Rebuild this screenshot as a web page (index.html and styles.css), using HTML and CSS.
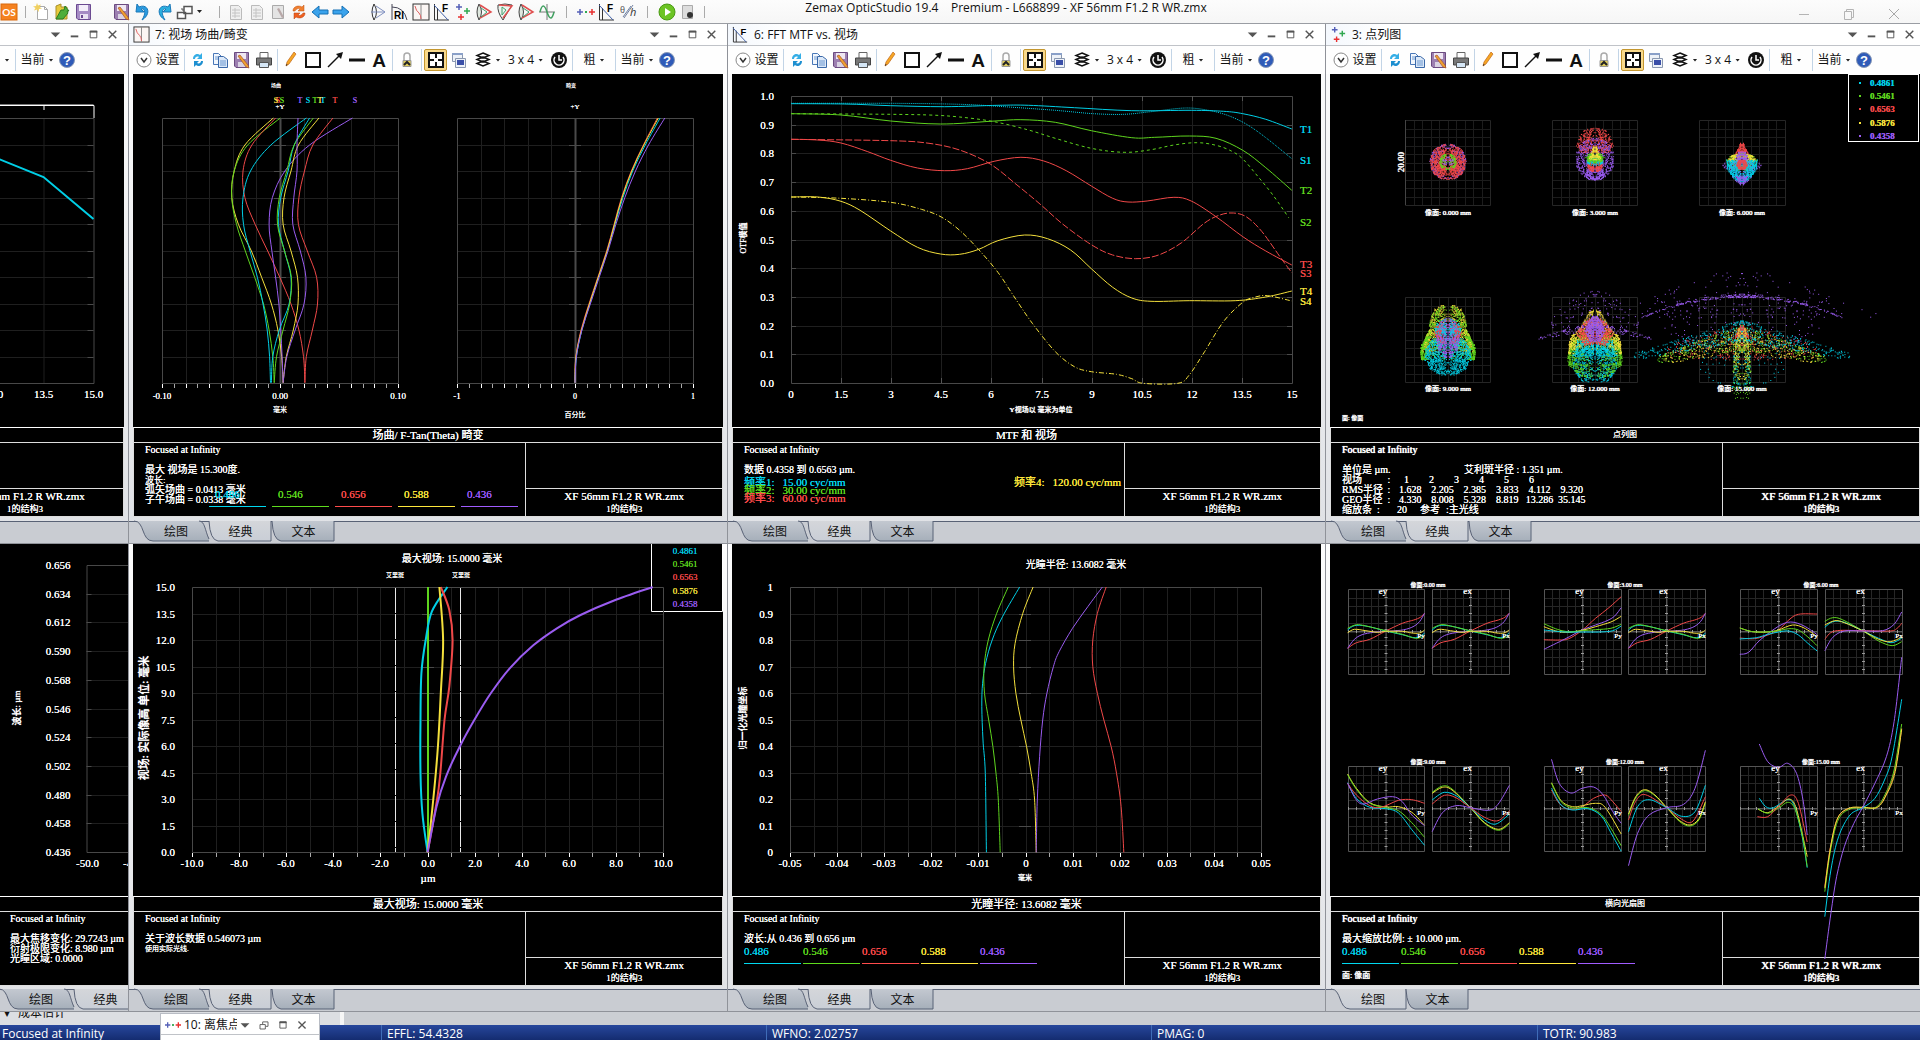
FILE: index.html
```html
<!DOCTYPE html>
<html lang="en">
<head>
<meta charset="utf-8">
<title>Zemax OpticStudio</title>
<link rel="stylesheet" href="styles.css">
</head>
<body>
<svg class="sprite" aria-hidden="true">
  <defs>
    <linearGradient id="gTab" x1="0" y1="0" x2="0" y2="1"><stop offset="0" stop-color="#c3c8d0"/><stop offset="1" stop-color="#a6afba"/></linearGradient>
    <linearGradient id="gTabOn" x1="0" y1="0" x2="0" y2="1"><stop offset="0" stop-color="#d4d6da"/><stop offset="1" stop-color="#c9ced6"/></linearGradient>
    <symbol id="i-os" viewBox="0 0 18 18"><rect x="1" y="1" width="16" height="16" fill="#f58220" stroke="#d9690c"/><text x="9" y="13" font-size="10" font-weight="700" text-anchor="middle" fill="#fff" font-family="Lato, sans-serif">OS</text></symbol>
    <symbol id="i-new" viewBox="0 0 18 18"><path d="M4.500 3.500h7l3 3v10h-10z" fill="#fff" stroke="#aaa"/><path d="M11.500 3.500v3h3" fill="none" stroke="#aaa"/><path d="M4 0l1 2.500L8 1.500 6.500 4 9 5.500 6 6l-.5 3L4 6.500 1 7.500 2.500 5 0 3.500 3 3z" fill="#f0d060"/></symbol>
    <symbol id="i-open" viewBox="0 0 18 18"><path d="M2 16V3l5-2v3h6v12z" fill="#e8c93c" stroke="#a88f2a"/><path d="M2 16l5-9h3l1-4 4 5h-2l1 2-5 6z" fill="#4fae3a" stroke="#2c7a22"/></symbol>
    <symbol id="i-save" viewBox="0 0 18 18"><path d="M1.500 1.500h14v15H3l-1.500-1.500z" fill="#a58bc4" stroke="#6b4a91"/><path d="M4 2h9v6H4z" fill="#f4effa"/><path d="M5 11h8v5H5z" fill="#e9e2f2"/><path d="M6 12h2v3H6z" fill="#6b4a91"/></symbol>
    <symbol id="i-edit" viewBox="0 0 18 18"><path d="M1.500 1.500h14v15H3l-1.500-1.500z" fill="#9c7fb0" stroke="#6b4a80"/><path d="M4 2h9v6H4z" fill="#eee6f2"/><path d="M5 11h8v5H5z" fill="#d9d2e2"/><path d="M5 5l2-1 8 10 1 3-3-1z" fill="#f0a030" stroke="#a0522d" stroke-width=".7"/></symbol>
    <symbol id="i-undo" viewBox="0 0 18 18"><path d="M3 1L2 9l8 0-3-3c3-1 6 3 1 11C18 11 14 0 5 4z" fill="#2b9be0" stroke="#1b78b8"/></symbol>
    <symbol id="i-redo" viewBox="0 0 18 18"><path d="M15 1l1 8-8 0 3-3c-3-1-6 3-1 11C0 11 4 0 13 4z" fill="#2bb0e0" stroke="#1b78b8"/></symbol>
    <symbol id="i-cascade" viewBox="0 0 18 18"><path d="M8 3.500h8v7H8zM1.500 9.500h8v6h-8z" fill="#fff" stroke="#555" stroke-width="1.500"/><path d="M5 6h2v2" fill="none" stroke="#555"/></symbol>
    <symbol id="i-greydoc" viewBox="0 0 18 18"><path d="M3.500 2.500h8l3 3v11h-11z" fill="#efefef" stroke="#bbb"/><path d="M5 7h8M5 10h8M5 13h8M8 5v10" stroke="#c4c4c4"/></symbol>
    <symbol id="i-greyedit" viewBox="0 0 18 18"><path d="M3.500 2.500h11v13h-11z" fill="#e4e4e4" stroke="#aaa"/><path d="M8 6l2-1 5 9-2 1z" fill="#b8a8a8"/></symbol>
    <symbol id="i-swap" viewBox="0 0 18 18"><path d="M3 8c0-5 6-6 9-4l2-2v6H8l2-2C8 5 6 6 5 8z" fill="#f08030" stroke="#c05010" stroke-width=".5"/><path d="M15 10c0 5-6 6-9 4l-2 2v-6h6l-2 2c2 1 4 0 5-2z" fill="#f06020" stroke="#b04010" stroke-width=".5"/></symbol>
    <symbol id="i-left" viewBox="0 0 18 18"><path d="M1 9l7-6v4h9v4H8v4z" fill="#3ba3ec" stroke="#1670b4"/></symbol>
    <symbol id="i-right" viewBox="0 0 18 18"><path d="M17 9l-7-6v4H1v4h9v4z" fill="#3ba3ec" stroke="#1670b4"/></symbol>
    <symbol id="i-lens" viewBox="0 0 18 18"><path d="M4 1q-4 8 0 16 5-8 0-16z" fill="#f4f8ff" stroke="#333"/><path d="M6 3l9 6-9 6M1 9h14" fill="none" stroke="#8090c0"/></symbol>
    <symbol id="i-ri" viewBox="0 0 18 18"><path d="M1 1v16M1 4q12 0 15 13" fill="none" stroke="#445"/><text x="3" y="16" font-size="10" font-weight="700" font-family="Liberation Sans, sans-serif">RI</text></symbol>
    <symbol id="i-field" viewBox="0 0 18 18"><rect x="1" y="1" width="16" height="16" fill="#fbf6f4" stroke="#333"/><path d="M9 1v16" stroke="#888"/><path d="M3 3q1 5 4 7 2 2 2 6" fill="none" stroke="#e06060"/></symbol>
    <symbol id="i-mtf" viewBox="0 0 18 18"><path d="M1.500 1v16H16M4.500 5v12" fill="none" stroke="#333"/><path d="M1 2l14 15" stroke="#4060a8"/><text x="9" y="9" font-size="10" font-weight="700" font-family="Liberation Sans, sans-serif">F</text></symbol>
    <symbol id="i-spot" viewBox="0 0 18 18"><path d="M5 1v6M2 4h6" stroke="#5560b8" stroke-width="1.500"/><path d="M13 5v6M10 8h6" stroke="#30a850" stroke-width="1.500"/><path d="M7 11v6M4 14h6" stroke="#e83030" stroke-width="1.500"/></symbol>
    <symbol id="i-lensr" viewBox="0 0 18 18"><path d="M4 1q-4 8 0 16 5-8 0-16z" fill="#dfe8df" stroke="#444"/><path d="M5 2l11 7-11 6" fill="none" stroke="#e05050" stroke-width="1.500"/><path d="M6 5l6 4-6 5" fill="none" stroke="#40a070"/></symbol>
    <symbol id="i-lensw" viewBox="0 0 18 18"><path d="M2 2q7-2 14 0L7 17q-6-8-5-15z" fill="#eef4ee" stroke="#444"/><path d="M3 2l13 1-9 12" fill="none" stroke="#e05050" stroke-width="1.500"/><path d="M6 4l4 3-4 5z" fill="none" stroke="#40a070"/></symbol>
    <symbol id="i-wave" viewBox="0 0 18 18"><path d="M1 9h16M9 1v16" stroke="#777"/><path d="M2 9q3-12 7 0t7 0" fill="none" stroke="#40a060" stroke-width="1.500"/></symbol>
    <symbol id="i-dots" viewBox="0 0 18 18"><path d="M3 6v6M0 9h6" stroke="#5560b8" stroke-width="1.500"/><path d="M8 9h2" stroke="#30a850" stroke-width="2"/><path d="M15 6v6M12 9h6" stroke="#e83030" stroke-width="1.500"/></symbol>
    <symbol id="i-theta" viewBox="0 0 18 18"><text x="1" y="10" font-size="9" font-family="Liberation Sans, sans-serif" fill="#555">θ</text><path d="M5 15l9-13M4 14l8-11" stroke="#7080a0"/><text x="11" y="13" font-size="11" font-style="italic" fill="#333">h</text></symbol>
    <symbol id="i-play" viewBox="0 0 18 18"><circle cx="9" cy="9" r="8" fill="#6cc424" stroke="#4a9a14"/><path d="M7 5l6 4-6 4z" fill="#fff"/></symbol>
    <symbol id="i-bug" viewBox="0 0 18 18"><path d="M3.500 2.500h10v13h-10z" fill="#ddd" stroke="#aaa"/><circle cx="11" cy="12" r="3" fill="#333"/></symbol>
    <symbol id="i-chev" viewBox="0 0 18 18"><circle cx="9" cy="9" r="7" fill="#fff" stroke="#888"/><path d="M6 7l3 4 3-4" fill="none" stroke="#333" stroke-width="1.500"/></symbol>
    <symbol id="i-sync" viewBox="0 0 18 18"><path d="M4 8c0-5 5-6 7-4l2-2v6H8l2-2C8 5 6 6 6 8z" fill="#35aee6"/><path d="M14 10c0 5-5 6-7 4l-2 2v-6h5l-2 2c2 1 4 0 4-2z" fill="#1d8fd0"/></symbol>
    <symbol id="i-copy" viewBox="0 0 18 18"><path d="M2.500 2.500h5l3 3v8h-8z" fill="#f2f7fd" stroke="#4a78b8"/><path d="M7.500 5.500h5l4 3v8h-9z" fill="#dbe8f8" stroke="#3a68a8"/><path d="M9 10h6M9 12h6M9 14h6M4 6h3M4 8h3" stroke="#6c98d0"/></symbol>
    <symbol id="i-print" viewBox="0 0 18 18"><path d="M5 1.500h8v6H5z" fill="#fff" stroke="#666"/><path d="M1.500 7h15v7h-15z" fill="#777" stroke="#444"/><path d="M4.500 11.500h9v5h-9z" fill="#d5e6f5" stroke="#555"/></symbol>
    <symbol id="i-pencil" viewBox="0 0 18 18"><path d="M4 15l1-4 7-10 2 2-7 10z" fill="#f6a623" stroke="#c0661a" stroke-width=".7"/><path d="M4 15l.5-2 1.200.8z" fill="#222"/></symbol>
    <symbol id="i-rect" viewBox="0 0 18 18"><rect x="2" y="2" width="14" height="14" fill="#fff" stroke="#111" stroke-width="2"/></symbol>
    <symbol id="i-arrow" viewBox="0 0 18 18"><path d="M2 16L14 4" stroke="#111" stroke-width="1.500"/><path d="M17 1l-2 7-5-5z" fill="#111"/></symbol>
    <symbol id="i-line" viewBox="0 0 18 18"><path d="M1 9h16" stroke="#111" stroke-width="3"/></symbol>
    <symbol id="i-text" viewBox="0 0 18 18"><text x="9" y="16" font-size="19" font-weight="700" text-anchor="middle" font-family="Liberation Sans, sans-serif" fill="#111">A</text></symbol>
    <symbol id="i-lock" viewBox="0 0 18 18"><path d="M6 10V5q0-3 3-3t3 3v5" fill="none" stroke="#aaa" stroke-width="1.500"/><path d="M5 9.500h8v6H5z" fill="#e2cf5a" stroke="#999"/><path d="M6 14l3-3 3 3" stroke="#222" fill="none" stroke-width="2"/></symbol>
    <symbol id="i-target" viewBox="0 0 18 18"><path d="M2 2h14v14H2z" fill="#fff" stroke="#111" stroke-width="2"/><path d="M9 2v5M9 11v5M2 9h5M11 9h5" fill="none" stroke="#111" stroke-width="2"/></symbol>
    <symbol id="i-wins" viewBox="0 0 18 18"><path d="M2.500 2.500h10v8h-10z" fill="#eef2f8" stroke="#8a98b0"/><path d="M2 2h11v2H2z" fill="#8aa0c8"/><path d="M5.500 7.500h10v9h-10z" fill="#eef2f8" stroke="#8a98b0"/><path d="M7 9h7v5H7z" fill="#3a4fa8"/></symbol>
    <symbol id="i-layers" viewBox="0 0 18 18"><path d="M9 2l6 2.500L9 7 3 4.500zM3 8.500L9 6l6 2.500L9 11zM3 12.500L9 10l6 2.500L9 15z" fill="#fff" stroke="#111" stroke-width="1.500"/></symbol>
    <symbol id="i-clock" viewBox="0 0 18 18"><circle cx="9" cy="9" r="8" fill="#111"/><path d="M5 6a5 5 0 1 0 8 0" fill="none" stroke="#fff" stroke-width="1.500"/><path d="M9 4v5h3" fill="none" stroke="#fff" stroke-width="1.500"/></symbol>
    <symbol id="i-help" viewBox="0 0 18 18"><circle cx="9" cy="9" r="7.500" fill="#2f5bb8" stroke="#8a9ab8"/><text x="9" y="13.500" font-size="13" font-weight="700" text-anchor="middle" fill="#fff" font-family="Liberation Sans, sans-serif">?</text></symbol>
    <symbol id="i-down" viewBox="0 0 18 18"><path d="M4 7h10l-5 5z" fill="#555"/></symbol>
    <symbol id="i-min" viewBox="0 0 18 18"><path d="M5 11h8" stroke="#555" stroke-width="2"/></symbol>
    <symbol id="i-max" viewBox="0 0 18 18"><path d="M5.500 5.500h7v7h-7z" fill="none" stroke="#555"/><path d="M5 6h8" stroke="#555" stroke-width="2"/></symbol>
    <symbol id="i-restore" viewBox="0 0 18 18"><path d="M4.500 8.500h6v5h-6zM7.500 8V5.500h6v5H11" fill="none" stroke="#555"/></symbol>
    <symbol id="i-x" viewBox="0 0 18 18"><path d="M5 5l8 8M13 5l-8 8" stroke="#555" stroke-width="1.500"/></symbol>
  </defs>
</svg>

<header class="appbar">
  <nav class="quick" id="quick" aria-label="Quick access"></nav>
  <h1 class="app-title">Zemax OpticStudio 19.4    Premium - L668899 - XF 56mm F1.2 R WR.zmx</h1>
  <div class="app-ctl">
    <button aria-label="Minimize"><svg viewBox="0 0 18 18"><path d="M4 9.500h10" stroke="#b4b4b4"/></svg></button>
    <button aria-label="Restore"><svg viewBox="0 0 18 18"><path d="M4.500 6.500h7v8h-7zM6.500 6V4.500h7v8H12" fill="none" stroke="#b4b4b4"/></svg></button>
    <button aria-label="Close"><svg viewBox="0 0 18 18"><path d="M4 4l10 10M14 4L4 14" stroke="#a8a8a8"/></svg></button>
  </div>
</header>

<main class="desk">
  <section class="cell cell-end">
    <article class="win">
      <div class="titlebar"><span class="win-title"></span></div>
      <div class="toolbar toolbar-end"></div>
      <svg class="chart" id="c1" viewBox="-466 74 590 353"></svg>
      <div class="foot"><h2 class="foot-title"></h2><div class="foot-left"></div><div class="foot-blank"></div><p class="foot-file">XF 56mm F1.2 R WR.zmx<br><small>1的结构3</small></p></div>
      <div class="tabs"></div>
    </article>
  </section>

  <section class="cell">
    <article class="win">
      <div class="titlebar"><svg class="ic"><use href="#i-field"/></svg><span class="win-title">7: 视场 场曲/畸变</span></div>
      <div class="toolbar"></div>
      <svg class="chart" id="c2" viewBox="133 74 590 353"></svg>
      <div class="foot">
        <h2 class="foot-title">场曲/ F-Tan(Theta) 畸变</h2>
        <div class="foot-left">
          <p>Focused at Infinity</p><p class="gap">最大 视场是 15.300度.</p><p><small>波长:</small></p><p>弧矢场曲 = 0.0413 毫米</p><p>子午场曲 = 0.0338 毫米</p>
          <ul class="waves waves-over"><li class="cy">0.486</li><li class="gr">0.546</li><li class="rd">0.656</li><li class="ye">0.588</li><li class="pu">0.436</li></ul>
        </div>
        <div class="foot-blank"></div><p class="foot-file">XF 56mm F1.2 R WR.zmx<br><small>1的结构3</small></p>
      </div>
      <div class="tabs" data-tabs="绘图,经典*,文本"></div>
    </article>
  </section>

  <section class="cell">
    <article class="win">
      <div class="titlebar"><svg class="ic"><use href="#i-mtf"/></svg><span class="win-title">6: FFT MTF vs. 视场</span></div>
      <div class="toolbar"></div>
      <svg class="chart" id="c3" viewBox="732 74 589 353"></svg>
      <div class="foot">
        <h2 class="foot-title">MTF 和 视场</h2>
        <div class="foot-left">
          <p>Focused at Infinity</p><p class="gap">数据 0.4358 到 0.6563 µm.</p>
          <div class="freqs"><p class="cy"><span>频率1:</span>15.00 cyc/mm</p><p class="ye"><span>频率4:</span>120.00 cyc/mm</p><p class="gr"><span>频率2:</span>30.00 cyc/mm</p><p></p><p class="rd"><span>频率3:</span>60.00 cyc/mm</p></div>
        </div>
        <div class="foot-blank"></div><p class="foot-file">XF 56mm F1.2 R WR.zmx<br><small>1的结构3</small></p>
      </div>
      <div class="tabs" data-tabs="绘图,经典*,文本"></div>
    </article>
  </section>

  <section class="cell cell-last">
    <article class="win">
      <div class="titlebar"><svg class="ic"><use href="#i-spot"/></svg><span class="win-title">3: 点列图</span></div>
      <div class="toolbar"></div>
      <svg class="chart" id="c4" viewBox="1330 74 590 353"></svg>
      <div class="foot">
        <h2 class="foot-title small">点列图</h2>
        <div class="foot-left">
          <p class="hv">Focused at Infinity</p>
          <p class="gap pair"><span>单位是 µm.</span><span>艾利斑半径 : 1.351 µm.</span></p>
          <table class="spots idx">
            <tr><th>视场</th><th>:</th><td>1</td><td>2</td><td>3</td><td>4</td><td>5</td><td>6</td></tr>
          </table>
          <table class="spots">
            <tr><th>RMS半径</th><th>:</th><td>1.628</td><td>2.205</td><td>2.385</td><td>3.833</td><td>4.112</td><td>9.320</td></tr>
            <tr><th>GEO半径</th><th>:</th><td>4.330</td><td>8.008</td><td>5.328</td><td>8.819</td><td>13.286</td><td>35.145</td></tr>
          </table>
          <p class="scale"><span>缩放条</span><span>:</span><span>20</span><span>参考</span><span>:主光线</span></p>
        </div>
        <div class="foot-blank"></div><p class="foot-file hv">XF 56mm F1.2 R WR.zmx<br><small>1的结构3</small></p>
      </div>
      <div class="tabs" data-tabs="绘图,经典*,文本"></div>
    </article>
  </section>

  <section class="cell cell-low cell-start">
    <article class="win">
      <svg class="chart" id="c5" viewBox="-1 544 590 352"></svg>
      <div class="foot">
        <h2 class="foot-title"></h2>
        <div class="foot-left"><p>Focused at Infinity</p><p class="gap">最大焦移变化: 29.7243 µm</p><p>衍射极限变化: 8.980 µm</p><p>光瞳区域: 0.0000</p></div>
        <div class="foot-blank"></div><p class="foot-file"></p>
      </div>
      <div class="tabs" data-tabs="绘图,经典*"></div>
    </article>
  </section>

  <section class="cell cell-low">
    <article class="win">
      <svg class="chart" id="c6" viewBox="133 544 590 352"></svg>
      <div class="foot">
        <h2 class="foot-title">最大视场: 15.0000 毫米</h2>
        <div class="foot-left"><p>Focused at Infinity</p><p class="gap">关于波长数据 0.546073 µm</p><p class="tiny">使用实际光线.</p></div>
        <div class="foot-blank"></div><p class="foot-file">XF 56mm F1.2 R WR.zmx<br><small>1的结构3</small></p>
      </div>
      <div class="tabs" data-tabs="绘图,经典*,文本"></div>
    </article>
  </section>

  <section class="cell cell-low">
    <article class="win">
      <svg class="chart" id="c7" viewBox="732 544 589 352"></svg>
      <div class="foot">
        <h2 class="foot-title">光瞳半径: 13.6082 毫米</h2>
        <div class="foot-left"><p>Focused at Infinity</p><p class="gap">波长:从 0.436 到 0.656 µm</p>
          <ul class="waves"><li class="cy">0.486</li><li class="gr">0.546</li><li class="rd">0.656</li><li class="ye">0.588</li><li class="pu">0.436</li></ul></div>
        <div class="foot-blank"></div><p class="foot-file">XF 56mm F1.2 R WR.zmx<br><small>1的结构3</small></p>
      </div>
      <div class="tabs" data-tabs="绘图,经典*,文本"></div>
    </article>
  </section>

  <section class="cell cell-low cell-last">
    <article class="win">
      <svg class="chart" id="c8" viewBox="1330 544 590 352"></svg>
      <div class="foot">
        <h2 class="foot-title small">横向光扇图</h2>
        <div class="foot-left"><p class="hv">Focused at Infinity</p><p class="gap">最大缩放比例: ± 10.000 µm.</p>
          <ul class="waves"><li class="cy">0.486</li><li class="gr">0.546</li><li class="rd">0.656</li><li class="ye">0.588</li><li class="pu">0.436</li></ul>
          <p class="surf hv">面: 像面</p></div>
        <div class="foot-blank"></div><p class="foot-file hv">XF 56mm F1.2 R WR.zmx<br><small>1的结构3</small></p>
      </div>
      <div class="tabs" data-tabs="绘图*,文本"></div>
    </article>
  </section>
</main>

<div class="understrip"><span>▾</span><span>成本估计</span></div>
<footer class="status"><span>Focused at Infinity</span><span>EFFL: 54.4328</span><span>WFNO: 2.02757</span><span>PMAG: 0</span><span>TOTR: 90.983</span></footer>
<aside class="floatwin">
  <svg class="ic"><use href="#i-dots"/></svg><span class="float-title">10: 离焦点</span>
  <button aria-label="Menu"><svg class="ic"><use href="#i-down"/></svg></button>
  <button aria-label="Restore"><svg class="ic"><use href="#i-restore"/></svg></button>
  <button aria-label="Maximize"><svg class="ic"><use href="#i-max"/></svg></button>
  <button aria-label="Close"><svg class="ic"><use href="#i-x"/></svg></button>
</aside>
<script src="charts.js"></script>
</body>
</html>
```
FILE: styles.css
```css
* { box-sizing: border-box; }
body {
  margin: 0; min-height: 100vh; display: flex; flex-direction: column;
  background: #cbced3; color: #111; overflow: hidden; position: relative;
  font: 12px/16px "Open Sans", "Noto Sans CJK SC", sans-serif;
}
h1, h2, p, ul { margin: 0; padding: 0; font-weight: 400; }
button { border: 0; background: none; padding: 0; margin: 0; font: inherit; color: inherit; }
.sprite { position: absolute; width: 0; height: 0; }
.ic { width: 18px; height: 18px; flex: none; display: block; }

.appbar { height: 24px; flex: none; display: grid; grid-template-columns: 1fr auto 1fr; background: linear-gradient(#fcfcfc, #f6f6f6); border-bottom: 1px solid #9a9da3; }
.quick { display: flex; align-items: center; gap: 3px; min-width: 0; }
.quick .sep { width: 1px; height: 12px; background: #aaa; margin: 0 4px; }
.quick .sep.wide { margin: 0 7px; }
.quick .skip { width: 14px; }
.quick .caret { margin-right: 10px; }
.app-title { font-size: 12px; line-height: 15px; white-space: pre; padding-left: 92px; }
.app-ctl { display: flex; justify-content: flex-end; align-items: center; gap: 27px; padding: 4px 17px 0 0; }
.app-ctl button, .app-ctl svg { width: 18px; height: 18px; display: block; }

.desk { flex: 1; display: grid; grid-template-columns: 128fr 599fr 598fr 595fr; grid-template-rows: 520fr 468fr; }
.cell { min-width: 0; overflow: hidden; display: flex; border-bottom: 1px solid #8f9299; background: linear-gradient(#fdfdfd, #dfe1e5); }
.cell + .cell { border-left: 1px solid #8f9299; }
.cell.cell-start { border-left: 0; }
.cell-end { justify-content: flex-end; }
.win { flex: 1; min-width: 0; display: flex; flex-direction: column; }
.cell-end .win, .cell-start .win { flex: none; width: 599px; }
.cell-start .win { margin-left: -6px; }
.titlebar { height: 22px; flex: none; display: flex; align-items: center; gap: 5px; padding: 0 6px 0 4px; background: linear-gradient(90deg, #f4f8fd, #fff 10%); border-bottom: 1px solid #c0c3c8; }
.win-title { flex: 1; white-space: nowrap; }
.win-ctl { display: flex; }
.win-ctl button { width: 19px; display: flex; justify-content: center; }
.titlebar .ic { width: 17px; height: 17px; }
.cell-last .titlebar { padding-right: 1px; }
.toolbar { height: 28px; flex: none; display: flex; align-items: center; padding-left: 4px; background: #fefefe; }
.toolbar-end { justify-content: flex-end; padding-right: 50px; }
.toolbar button { width: 22px; height: 24px; display: flex; align-items: center; justify-content: center; flex: none; white-space: nowrap; }
.toolbar .sep { width: 1px; height: 22px; background: #c2d4e6; margin: 0 2px; flex: none; }
.toolbar .set { width: 49px; gap: 2px; }
.toolbar .w12 { width: 12px; }
.toolbar .w24 { width: 24px; }
.toolbar .w32 { width: 32px; gap: 4px; }
.toolbar .w38 { width: 38px; gap: 4px; }
.toolbar .w45 { width: 45px; gap: 4px; }
.toolbar .on { width: 23px; height: 22px; background: #f8d98c; border: 1px solid #c4962e; border-radius: 2px; }
.caret { width: 5px; height: 3px; background: #222; clip-path: polygon(0 0, 100% 0, 50% 100%); flex: none; }

.chart { flex: 1 1 0; height: 0; min-height: 0; margin: 0 4px; background: #000; display: block; overflow: visible; position: relative; }
.chart, .foot { font-family: "Liberation Serif", "Noto Sans CJK SC", serif; color: #fff; text-shadow: 0 0 0 currentColor; }
.cell-last .chart, .cell-last .foot { margin-right: 0; }
#c8 { z-index: 1; }
.foot {
  flex: none; height: 90px; margin: 0 4px; background: #ddd; border: 1px solid #ddd; border-top-color: #fff; font-size: 10px; line-height: 10px;
  display: grid; grid-template-columns: 392fr 196fr; grid-template-rows: 14px 45px 27px; gap: 1px; white-space: nowrap;
}
.foot > * { background: #000; min-width: 0; }
.foot-title { grid-column: 1 / 3; font-size: 11px; line-height: 14px; text-align: center; }
.foot-title.small { font-size: 8px; }
.foot-left { grid-row: 2 / 4; padding: 2px 0 0 11px; position: relative; }
.gap { padding-top: 10px; }
.foot-file { font-size: 11px; line-height: 12px; text-align: center; padding-top: 1px; }
small { font-size: 9px; }
.tiny { font-size: 7px; }
.hv { text-shadow: 0 0 0 currentColor, 0 0 1px currentColor; }
.surf { font-size: 8px; padding-top: 7px; }
.waves { list-style: none; display: grid; grid-template-columns: repeat(5, 57px); gap: 2px; padding-top: 1px; font-size: 11px; line-height: 12px; }
.waves li { border-bottom: 1px solid; padding-bottom: 6px; }
.waves-over { position: absolute; left: 75px; top: 44px; gap: 6px; }
.waves-over li { padding: 0 0 6px 6px; }
.freqs { display: grid; grid-template-columns: 270px auto; justify-content: start; font-size: 11px; line-height: 8px; padding-top: 3px; }
.freqs span { display: inline-block; margin-right: 8px; }
.cy { color: #00d8f0; } .gr { color: #5fdc1e; } .rd { color: #ff4c4c; } .ye { color: #ffe83c; } .pu { color: #a05cff; }
.pair span:first-child { display: inline-block; width: 122px; }
.spots { border-spacing: 0; font-size: 10px; line-height: 10px; table-layout: fixed; width: 246px; }
.spots th, .spots td { padding: 0; font-weight: 400; text-align: center; }
.spots th:first-child { width: 42px; text-align: left; }
.spots th:nth-child(2) { width: 10px; }
.spots.idx { width: 202px; }
.scale span { display: inline-block; }
.scale span:first-child { width: 35px; } .scale span:nth-child(2) { width: 20px; } .scale span:nth-child(3) { width: 23px; } .scale span:nth-child(4) { width: 26px; }

.tabs { flex: none; height: 22px; margin-top: 4px; display: flex; background: #c9ccd2; border-top: 1px solid #596276; }
.cell-low .tabs { margin-top: 3px; }
.tab { position: relative; width: 63px; height: 20px; font-size: 12px; line-height: 18px; flex: none; }
.tab:first-child { width: 80px; padding-left: 14px; }
.tab svg { position: absolute; inset: -1px 0 0 0; width: 100%; height: 21px; overflow: visible; }
.tab span { position: relative; }

.understrip { height: 13px; flex: none; display: flex; gap: 8px; padding-left: 4px; overflow: hidden; line-height: 2px; font-size: 12px; background: linear-gradient(90deg, #dcdee2 0 340px, #f6f6f6 340px 344px, #cbced3 344px); }
.status { height: 15px; flex: none; display: grid; grid-template-columns: 381fr 385fr 385fr 386fr 383fr; background: linear-gradient(#27479c, #142c70); color: #fff; line-height: 17px; overflow: hidden; }
.status span { padding-left: 5px; white-space: nowrap; }
.status span:first-child { padding-left: 2px; }
.status span + span { border-left: 1px solid #3f6cb8; }
.floatwin { position: absolute; left: 160px; bottom: 0; width: 160px; height: 27px; background: #fff; border: 1px solid #b8bcc4; border-bottom: 0; display: flex; align-items: center; padding: 0 4px 5px; }
.floatwin::after { content: ""; position: absolute; left: 0; right: 0; bottom: 5px; height: 1px; background: #c0c3c8; }
.float-title { width: 56px; padding-left: 3px; overflow: hidden; white-space: nowrap; flex: none; }
.floatwin .ic { width: 16px; height: 18px; }
.floatwin button { width: 19px; flex: none; }
```
FILE: charts.js
```js
const CY = '#00cfe6', GR = '#5ed41e', RD = '#f04848', YE = '#f4e03c', PU = '#9a5cf0';
const COL = { c: CY, g: GR, r: RD, y: YE, p: PU };
const NS = 'http://www.w3.org/2000/svg';

function el(root, name, attrs, text) {
  const e = document.createElementNS(NS, name);
  for (const k in attrs) e.setAttribute(k, attrs[k]);
  if (text !== undefined) e.textContent = text;
  root.appendChild(e);
  return e;
}
const path = (r, d, stroke, w = 1, extra = {}) => el(r, 'path', { d, stroke, 'stroke-width': w, fill: 'none', ...extra });
const text = (r, x, y, s, size = 11, anchor = 'middle', fill = '#fff', extra = {}) =>
  el(r, 'text', { x, y: y + Math.round(size * 0.34), 'font-size': size, 'text-anchor': anchor, fill, style: `color:${fill}`, ...extra }, s);
const vtext = (r, x, y, s, size) =>
  el(r, 'text', { transform: `translate(${x + Math.round(size * 0.36)} ${y}) rotate(-90)`, 'font-size': size, 'text-anchor': 'middle', fill: '#fff', class: 'hv' }, s);

function grid(r, x0, y0, x1, y1, nx, ny, color = '#1f1f1f', frame = '#484848') {
  let d = '';
  for (let i = 1; i < nx; i++) d += `M${Math.round(x0 + (x1 - x0) * i / nx) + 0.5} ${y0}V${y1}`;
  for (let i = 1; i < ny; i++) d += `M${x0} ${Math.round(y0 + (y1 - y0) * i / ny) + 0.5}H${x1}`;
  path(r, d, color);
  if (frame) path(r, `M${x0 + .5} ${y0 + .5}H${x1 + .5}V${y1 + .5}H${x0 + .5}Z`, frame);
}
function ticks(r, x0, x1, y, n) {
  for (let i = 0; i <= n; i++) {
    const x = Math.round(x0 + (x1 - x0) * i / n) + 0.5;
    path(r, `M${x} ${y + 1}v4`, i % 2 ? '#aaa' : '#fff');
  }
}
function stubs(r, x, y0, y1, n, a, b) {
  for (let i = 1; i < n; i++) path(r, `M${x - a} ${Math.round(y0 + (y1 - y0) * i / n) + .5}H${x + b}`, '#4a4a4a');
}
/* map(px, py) turns digitised samples into chart coordinates */
const mapper = (ox, oy, sx) => (x, y) => [ox + x / sx, oy + y / 3];
function smooth(pts) {
  let d = `M${pts[0][0].toFixed(1)} ${pts[0][1].toFixed(1)}`;
  for (let i = 0; i < pts.length - 1; i++) {
    const p0 = pts[i - 1] || pts[i], p1 = pts[i], p2 = pts[i + 1], p3 = pts[i + 2] || p2;
    const c = [p1[0] + (p2[0] - p0[0]) / 6, p1[1] + (p2[1] - p0[1]) / 6, p2[0] - (p3[0] - p1[0]) / 6, p2[1] - (p3[1] - p1[1]) / 6, p2[0], p2[1]];
    d += 'C' + c.map(v => v.toFixed(1)).join(' ');
  }
  return d;
}
function curve(r, map, flat, color, w = 1, dash) {
  const n = flat.trim().split(/[\s,]+/).map(Number), pts = [];
  for (let i = 0; i < n.length; i += 2) pts.push(map(n[i], n[i + 1]));
  path(r, smooth(pts), color, w, dash ? { 'stroke-dasharray': dash } : {});
}
/* curve sampled on the ten horizontal grid lines */
const ROWS = [144, 225, 303, 383, 463, 543, 622, 702, 780, 860, 938];
const rowCurve = (r, map, xs, color) => curve(r, map, xs.map((x, i) => `${x},${ROWS[i]}`).join(' '), color);
const $ = id => document.getElementById(id);

/* upper left: partly visible chart */
{
  const r = $('c1');
  grid(r, -206, 118, 94, 383, 6, 10);
  path(r, 'M-206 105.500H94.500V118', '#fff');
  path(r, 'M-206 104.500H94', '#777');
  path(r, 'M44.500 105v5', '#fff');
  stubs(r, 94, 118, 383, 10, 6, 0);
  path(r, 'M-40 150L0 159.300L44 177L94 219', CY, 2);
  text(r, -6, 394, '12.0'); text(r, 44, 394, '13.5'); text(r, 94, 394, '15.0');
}
/* field curvature and distortion */
{
  const r = $('c2'), m = mapper(0, 70, 2.148);
  for (const [a, b, c] of [[162, 398, 280], [457, 693, 575]]) {
    grid(r, a, 118, b, 383, 10, 10);
    path(r, `M${c + .5} 118V383`, '#4a4a4a', 2);
    stubs(r, c, 118, 383, 10, 6, 6);
    ticks(r, a, b, 383, 20);
    text(r, c, 107, '+Y', 7);
  }
  const L = [
    ['y', 587, 526, 503, 498, 512, 540, 562, 583, 597, 605, 608],
    ['g', 602, 532, 503, 498, 508, 527, 547, 566, 578, 586, 589],
    ['r', 592, 541, 522, 526, 548, 575, 601, 625, 642, 652, 655],
    ['c', 658, 582, 538, 522, 523, 537, 553, 565, 574, 579, 581],
    ['p', 757, 665, 612, 585, 578, 584, 592, 599, 603, 606, 608],
    ['r', 715, 672, 654, 642, 641, 660, 680, 682, 671, 658, 655],
    ['c', 665, 632, 619, 603, 598, 611, 625, 621, 600, 586, 583],
    ['g', 673, 632, 616, 600, 596, 611, 626, 622, 608, 594, 589],
    ['y', 685, 641, 625, 610, 608, 625, 639, 640, 630, 615, 608],
    ['p', 640, 638, 638, 631, 629, 645, 657, 653, 634, 616, 608],
    ['r', 1412, 1382, 1356, 1335, 1319, 1303, 1284, 1265, 1248, 1237, 1235],
    ['c', 1418, 1386, 1359, 1338, 1321, 1305, 1286, 1267, 1250, 1238, 1235],
    ['y', 1414, 1383, 1357, 1336, 1320, 1304, 1285, 1266, 1249, 1237, 1235],
    ['p', 1428, 1393, 1365, 1342, 1323, 1306, 1287, 1268, 1250, 1238, 1235]
  ];
  for (const [k, ...xs] of L) rowCurve(r, m, xs, COL[k]);
  for (const [x, s, k] of [[278, 'S', 'r'], [276, 'S', 'y'], [282, 'S', 'g'], [300, 'T', 'p'], [308, 'S', 'c'], [315, 'T', 'g'], [323, 'T', 'c'], [320, 'T', 'y'], [335, 'T', 'r'], [355, 'S', 'p']])
    text(r, x, 100, s, 8, 'middle', COL[k]);
  text(r, 276, 85, '场曲', 5); text(r, 571, 85, '畸变', 5);
  text(r, 162, 396, '-0.10', 9); text(r, 280, 396, '0.00', 9); text(r, 398, 396, '0.10', 9);
  text(r, 457, 396, '-1', 9); text(r, 575, 396, '0', 8); text(r, 693, 396, '1', 8);
  text(r, 280, 410, '毫米', 7); text(r, 575, 415, '百分比', 7);
}
/* MTF against field */
{
  const r = $('c3'), m = mapper(730, 70, 2.613);
  grid(r, 791, 96, 1292, 383, 10, 10);
  stubs(r, 791, 96, 383, 10, 0, 5); stubs(r, 1292, 96, 383, 10, 5, 0);
  for (let i = 1; i < 10; i++) path(r, `M${Math.round(791 + 50.1 * i) + .5} 96v5M${Math.round(791 + 50.1 * i) + .5} 383v-5`, '#555');
  const C = [
    ['c', '160,101 300,102 420,107 560,110 700,106 780,106 900,113 1050,122 1205,121 1290,124 1340,131 1400,148 1468,177'],
    ['c', '160,100 420,100 600,103 700,109 850,121 950,131 1030,133 1100,125 1190,114 1250,121 1300,136 1350,163 1400,203 1468,266', '1 1'],
    ['g', '160,131 290,135 420,153 550,162 680,154 760,149 850,157 944,182 1050,203 1110,202 1200,198 1270,205 1340,241 1400,293 1468,361'],
    ['g', '160,131 420,133 520,135 600,141 690,155 780,180 850,205 944,235 1030,247 1100,239 1160,225 1220,218 1270,226 1310,243 1340,267 1380,320 1420,377 1460,443', '3 3'],
    ['r', '160,208 230,210 290,219 360,245 420,271 490,294 560,302 620,296 690,274 760,262 820,273 880,303 944,348 1000,385 1040,396 1090,393 1160,382 1205,393 1270,440 1340,500 1400,543 1468,585'],
    ['r', '160,208 420,212 520,220 600,240 680,282 750,345 813,405 870,463 944,524 1000,555 1060,566 1120,555 1180,518 1240,459 1280,435 1315,429 1350,441 1390,485 1440,565 1468,608', '7 2'],
    ['y', '160,381 230,381 290,394 340,421 420,483 490,532 550,552 600,553 650,538 700,512 770,495 830,506 890,540 944,596 1000,652 1050,684 1100,694 1200,692 1320,692 1400,681 1468,663'],
    ['y', '160,381 290,385 420,397 500,418 552,441 600,481 650,539 700,607 740,676 790,760 850,845 900,890 944,905 1010,913 1050,926 1080,940 1170,940 1200,915 1240,845 1290,754 1340,697 1370,682 1405,677 1468,693', '5 2 1 2']
  ];
  for (const [k, p, d] of C) curve(r, m, p, COL[k], 1, d);
  for (let i = 0; i <= 10; i++) {
    text(r, 774, Math.round(383 - 28.7 * i), (i / 10).toFixed(1), 11, 'end');
    text(r, Math.round(791 + 50.1 * i), 394, String(i * 1.5));
  }
  for (const [s, y, k] of [['T1', 129, 'c'], ['S1', 160, 'c'], ['T2', 190, 'g'], ['S2', 222, 'g'], ['T3', 264, 'r'], ['S3', 273, 'r'], ['T4', 291, 'y'], ['S4', 301, 'y']])
    text(r, 1300, y, s, 11, 'start', COL[k]);
  text(r, 1041, 410, 'Y视场以 毫米为单位', 7, 'middle', '#fff', { class: 'hv' });
  vtext(r, 743, 238, 'OTF模值', 8);
}
/* spot diagrams: clouds of ray hits, mirrored about the vertical axis */
{
  const r = $('c4');
  let seed = 7;
  const rnd = () => (seed = (seed * 16807) % 2147483647) / 2147483647;
  /* profile: [y, half width] pairs; edge > 1 pushes points outwards */
  function cloud(k, n, cx, prof, edge = 1) {
    const y0 = prof[0][0], y1 = prof[prof.length - 1][0];
    const b = [];
    let made = 0;
    const maxW = Math.max(...prof.map(p => p[1]));
    while (made < n) {
      const y = y0 + (y1 - y0) * rnd();
      let w = 0;
      for (let i = 0; i < prof.length - 1; i++) if (y >= prof[i][0] && y <= prof[i + 1][0])
        w = prof[i][1] + (prof[i + 1][1] - prof[i][1]) * (y - prof[i][0]) / (prof[i + 1][0] - prof[i][0]);
      if (rnd() > w / maxW + .1) continue;
      const x = w * Math.pow(rnd(), 1 / edge);
      b.push(`M${(cx + x).toFixed(1)} ${y.toFixed(1)}h1M${(cx - x - 1).toFixed(1)} ${y.toFixed(1)}h1`);
      made++;
    }
    path(r, b.join(''), COL[k], 1);
  }
  function band(k, n, cx, reach, f, spread) {
    const b = [];
    for (let i = 0; i < n; i++) {
      const x = reach * Math.pow(rnd(), 1.5), y = f(x) + (rnd() - .5) * spread * (1 - x / reach * .7);
      b.push(`M${(cx + x).toFixed(1)} ${y.toFixed(1)}h1M${(cx - x - 1).toFixed(1)} ${y.toFixed(1)}h1`);
    }
    path(r, b.join(''), COL[k], 1);
  }
  const oval = (cy, ry, rx) => [-1, -.97, -.9, -.7, -.4, 0, .4, .7, .9, .97, 1].map(t => [cy + ry * t, rx * Math.sqrt(1 - t * t)]);
  const X = [1448, 1595, 1742];
  for (const [y0, y1] of [[120, 205], [297, 382]])
    for (const [a, b] of [[1405, 1490], [1552, 1637], [1699, 1785]]) grid(r, a, y0, b, y1, 10, 10, '#1c1c1c', '#262626');
  path(r, 'M1405.500 120V205', '#444');
  cloud('p', 230, X[0], oval(162, 18, 18), 1.6); cloud('r', 300, X[0], oval(162, 18, 18), 1.6);
  cloud('r', 240, X[0], oval(162, 13, 13), 1.5); cloud('g', 90, X[0], oval(162, 8, 8), 2); cloud('p', 20, X[0], oval(162, 5, 5));
  cloud('r', 240, X[1], [[128, 4], [131, 11], [137, 15], [146, 18], [153, 14]], 1.2); cloud('p', 290, X[1], oval(159, 21, 19), 1.3);
  cloud('p', 120, X[1], oval(174, 7, 9)); cloud('r', 110, X[1], oval(166, 6, 7)); cloud('c', 60, X[1], oval(162, 4, 8));
  cloud('g', 110, X[1], oval(158, 5, 9)); cloud('y', 70, X[1], [[146, 1], [152, 3], [160, 6]]);
  cloud('r', 160, X[2], [[143, 1], [150, 4], [158, 9]]); cloud('p', 26, X[2], oval(164, 12, 20), 3);
  cloud('g', 170, X[2], oval(162, 9, 15)); cloud('y', 120, X[2], oval(159, 5, 13), 1.5);
  cloud('p', 170, X[2], [[158, 6], [168, 13], [178, 9], [185, 1]]); cloud('c', 300, X[2], [[160, 15], [170, 14], [178, 8], [182, 3]], 1.3);
  cloud('p', 70, X[2], [[152, 3], [158, 6], [163, 2]]); cloud('r', 80, X[2], oval(165, 5, 5)); cloud('p', 40, X[2], [[176, 6], [181, 4], [185, 1]]);
  /* row two */
  cloud('y', 380, X[0], [[305, 5], [309, 13], [318, 17], [330, 18], [336, 21], [345, 25], [354, 26]], 1.6);
  cloud('y', 120, X[0], [[330, 18], [336, 21], [345, 24], [350, 25]], 8);
  cloud('g', 320, X[0], [[306, 5], [312, 14], [320, 18], [330, 19], [340, 23], [352, 27], [360, 25]], 1.5);
  cloud('g', 150, X[0], [[336, 20], [345, 26], [352, 27], [360, 26]], 12);
  cloud('c', 520, X[0], [[338, 15], [350, 22], [360, 23], [370, 17], [376, 5]], 1.2);
  cloud('r', 230, X[0], oval(332, 12, 13), 1.6); cloud('p', 260, X[0], oval(338, 20, 11)); cloud('c', 90, X[0], oval(329, 10, 13));
  cloud('c', 330, X[1], [[345, 20], [355, 23], [370, 21], [382, 12]], 1.3);
  cloud('g', 330, X[1], [[330, 10], [340, 21], [352, 26], [366, 25], [378, 12]], 1.6);
  cloud('g', 110, X[1], [[338, 22], [348, 25], [358, 27], [366, 26]], 12);
  cloud('y', 360, X[1], [[310, 5], [318, 9], [328, 14], [336, 23], [342, 25], [350, 23]], 1.3);
  cloud('y', 90, X[1], [[334, 22], [340, 25], [354, 26]], 10);
  cloud('c', 260, X[1], [[340, 18], [346, 18], [357, 22]]);
  cloud('r', 330, X[1], [[318, 4], [326, 14], [334, 18], [345, 10]], 1.2);
  cloud('p', 200, X[1], [[316, 2], [324, 7], [332, 9], [342, 5]]);
  band('p', 100, X[1], 56, x => 326 + x * .22, 8); cloud('p', 70, X[1], [[290, 8], [300, 22], [315, 42], [332, 44]], 1);
  band('p', 150, X[2], 100, x => 296 + x * x * .0022, 4); cloud('p', 80, X[2], [[271, 18], [282, 48], [295, 90], [306, 110], [312, 146], [318, 140]], 1);
  cloud('p', 50, X[2], [[300, 40], [320, 100], [336, 90], [345, 40]]);
  band('g', 260, X[2], 84, x => 338 + x * .26, 26); band('r', 190, X[2], 74, x => 341 + x * .15, 40);
  band('y', 200, X[2], 82, x => 339 + x * .26, 28); band('c', 280, X[2], 108, x => 331 + x * .24, 22);
  cloud('r', 60, X[2], [[325, 1], [330, 4], [338, 7]]); cloud('c', 26, X[2], oval(362, 26, 45), 3);
  cloud('g', 70, X[2], [[345, 6], [370, 9], [385, 8], [400, 7]], 1.5); cloud('c', 60, X[2], [[340, 7], [370, 8], [388, 9]], 1.5);
  cloud('y', 90, X[2], [[328, 3], [345, 7], [372, 8], [380, 2]], 1.3);
  ['0.000', '3.000', '6.000', '9.000', '12.000', '15.000'].forEach((v, i) =>
    text(r, X[i % 3], i < 3 ? 213 : 389, `像面: ${v} mm`, 7, 'middle', '#fff', { class: 'hv' }));
  vtext(r, 1401, 162, '20.00', 9);
  text(r, 1342, 418, '面: 像面', 6, 'start', '#fff', { class: 'hv' });
  el(r, 'rect', { x: 1848.5, y: 74.5, width: 70, height: 67, fill: '#000', stroke: '#fff' });
  [['0.4861', 'c'], ['0.5461', 'g'], ['0.6563', 'r'], ['0.5876', 'y'], ['0.4358', 'p']].forEach(([s, k], i) => {
    const y = 83 + Math.round(13.2 * i);
    el(r, 'rect', { x: 1859, y: y - 1, width: 2, height: 2, fill: COL[k] });
    text(r, 1870, y, s, 9, 'start', COL[k], { 'font-weight': 700 });
  });
}
/* lower left: partly visible chart */
{
  const r = $('c5');
  grid(r, 87, 565, 587, 852, 10, 10);
  stubs(r, 87, 565, 852, 10, 0, 5);
  for (let i = 0; i <= 10; i++) text(r, 71, Math.round(852 - 28.7 * i), (0.436 + .022 * i).toFixed(3), 11, 'end');
  text(r, 88, 863, '-50.0'); text(r, 135, 863, '-40.0');
  vtext(r, 17, 708, '波长:  µm', 9);
}
/* lateral colour */
{
  const r = $('c6'), m = mapper(0, 540, 2.119);
  path(r, 'M651.500 544V611.500H722.500V544', '#fff');
  grid(r, 192, 587, 663, 852, 20, 10);
  ticks(r, 192, 663, 852, 20);
  stubs(r, 428, 587, 852, 10, 6, 6);
  path(r, 'M395.500 588V852M460.500 588V852', '#e8e8e8', 1, { 'stroke-dasharray': '25 1' });
  path(r, 'M428 587V852', GR, 2);
  curve(r, m, '948,141 915,215 902,300 893,400 891,540 891,700 895,820 906,937', CY, 2);
  curve(r, m, '934,141 952,210 959,300 952,440 942,540 933,700 926,780 906,937', RD, 2);
  curve(r, m, '931,141 939,300 934,460 928,620 918,780 906,937', YE, 2);
  curve(r, m, '1383,141 1300,182 1230,225 1180,265 1130,316 1080,385 1040,460 1005,540 974,620 945,710 925,800 906,937', PU, 2);
  for (let i = 0; i <= 10; i++) {
    text(r, 175, Math.round(852 - 26.5 * i), (1.5 * i).toFixed(1), 11, 'end');
    text(r, Math.round(192 + 47.1 * i), 863, (-10 + 2 * i).toFixed(1));
  }
  text(r, 452, 559, '最大视场: 15.0000 毫米', 10);
  text(r, 395, 575, '艾里斑', 6); text(r, 461, 575, '艾里斑', 6);
  text(r, 428, 878, 'µm');
  vtext(r, 144, 718, '视场: 实际像高 单位: 毫米', 11);
  [['0.4861', 'c'], ['0.5461', 'g'], ['0.6563', 'r'], ['0.5876', 'y'], ['0.4358', 'p']].forEach(([s, k], i) =>
    text(r, 685, 551 + Math.round(13.2 * i), s, 9, 'middle', COL[k]));
}
/* longitudinal aberration */
{
  const r = $('c7'), m = mapper(730, 540, 2.613);
  grid(r, 790, 587, 1261, 852, 20, 10);
  ticks(r, 790, 1261, 852, 20);
  stubs(r, 1025, 587, 852, 10, 6, 6);
  curve(r, m, '757,141 712,230 685,300 668,370 660,430 658,500 661,600 667,700 670,937', CY);
  curve(r, m, '727,141 697,220 675,300 664,380 665,460 676,540 687,620 695,700 701,780 706,937', GR);
  curve(r, m, '792,141 765,220 745,310 741,380 747,460 760,540 775,620 787,700 796,780 800,937', YE);
  curve(r, m, '973,141 935,200 895,265 860,335 845,380 828,460 817,540 809,650 803,780 800,937', PU);
  curve(r, m, '983,141 960,220 948,300 948,380 960,460 977,540 996,620 1010,700 1022,800 1029,937', RD);
  for (let i = 0; i <= 10; i++) {
    text(r, 773, Math.round(852 - 26.5 * i), String(i / 10), 11, 'end');
    text(r, Math.round(790 + 47.1 * i), 863, i === 5 ? '0' : (-.05 + .01 * i).toFixed(2));
  }
  text(r, 1076, 565, '光瞳半径: 13.6082 毫米', 10);
  text(r, 1025, 878, '毫米', 7, 'middle', '#fff', { class: 'hv' });
  vtext(r, 743, 718, '归一化光瞳坐标', 9);
}
/* ray fans */
{
  const r = $('c8'), m = mapper(1320, 540, 2.613);
  const cols = [[1348, 1424], [1432, 1509], [1544, 1621], [1628, 1705], [1740, 1817], [1825, 1902]];
  [[589, 674], [766, 851]].forEach(([y0, y1], row) => cols.forEach(([a, b], i) => {
    grid(r, a, y0, b, y1, 10, 10, '#262626', '#555');
    const cx = (a + b) / 2, cy = (y0 + y1) / 2;
    path(r, `M${a} ${cy}H${b}M${cx} ${y0}V${y1}`, '#555');
    path(r, `M${a} ${cy}H${b}`, '#999', 3, { 'stroke-dasharray': '1 7' });
    path(r, `M${cx} ${y0}V${y1}`, '#999', 3, { 'stroke-dasharray': '1 7' });
    if (i % 2 === 0) text(r, b + 4, y0 - 4, `像面:${['0.00', '3.00', '6.00', '9.00', '12.00', '15.00'][row * 3 + i / 2]} mm`, 6, 'middle', '#fff', { class: 'hv' });
  }));
  const fan1 = [
    ['r', '72,325 95,308 130,298 172,273 215,250 245,240 262,232 273,220'],
    ['p', '72,325 90,298 110,284 140,277 172,274 210,271 240,262 260,245 273,220'],
    ['c', '72,270 90,257 120,258 172,273 215,284 250,293 273,280'],
    ['g', '72,265 95,254 120,258 172,272 215,283 250,295 273,288'],
    ['y', '72,278 90,268 120,272 150,277 172,274 215,274 240,279 260,279 273,270']
  ];
  for (const dx of [0, 221, 734]) for (const [k, p] of fan1) curve(r, (x, y) => m(x + dx, y), p, COL[k]);
  const F = [
    ['r', '585,299 625,300 650,296 685,271 720,235 755,203 787,170'], ['p', '585,328 640,297 685,270 720,255 750,242 770,228 787,203'],
    ['y', '585,260 620,274 650,277 685,271 720,260 760,246 787,229'], ['g', '585,251 620,268 650,275 685,272 720,269 760,265 787,253'],
    ['c', '585,270 640,276 685,276 730,276 765,272 787,258'],
    ['r', '1097,294 1135,296 1170,285 1198,270 1225,240 1250,223 1299,222'], ['p', '1097,343 1120,337 1150,300 1198,259 1230,246 1265,258 1299,284'],
    ['y', '1097,264 1130,275 1170,276 1198,270 1235,255 1265,264 1299,290'], ['g', '1097,264 1130,275 1165,276 1198,272 1225,266 1250,270 1275,291 1299,317'],
    ['c', '1097,297 1140,293 1170,283 1198,276 1225,273 1250,285 1275,310 1299,333'],
    ['g', '1319,244 1340,233 1365,239 1419,273 1460,303 1495,317 1520,305'], ['c', '1319,262 1340,245 1370,247 1419,273 1470,300 1495,308 1520,295'],
    ['y', '1319,255 1345,242 1370,248 1419,273 1460,298 1490,305 1520,292'], ['r', '1319,298 1345,273 1419,272 1490,273 1508,265 1520,250'],
    ['p', '1319,332 1340,292 1370,273 1419,273 1470,272 1500,253 1520,216'],
    ['y', '72,702 95,745 130,788 172,801 205,800 240,817 273,856'], ['g', '72,704 95,748 130,790 172,803 205,812 240,848 273,892'],
    ['c', '72,728 95,775 130,802 172,806 205,819 240,869 273,916'], ['r', '72,730 95,765 130,797 160,802 205,781 240,779 273,790'],
    ['p', '72,730 95,780 115,792 150,777 190,770 215,785 240,825 273,857'],
    ['g', '293,757 320,738 345,747 393,803 430,850 467,871 495,851'], ['y', '293,760 320,742 345,750 393,803 430,848 467,868 495,848'],
    ['c', '293,780 325,757 360,770 393,803 430,840 460,852 495,822'], ['r', '293,792 325,766 355,773 393,803 430,832 465,842 495,812'],
    ['p', '293,875 320,818 355,797 393,803 440,811 465,793 495,736'],
    ['r', '605,750 625,790 650,808 685,800 715,775 745,765 765,785 787,815'], ['y', '605,728 630,782 660,800 685,797 720,790 745,802 787,882'],
    ['g', '605,730 630,785 660,804 700,803 740,830 787,917'], ['c', '605,745 630,795 660,810 700,806 735,828 760,878 787,934'],
    ['p', '605,658 625,730 655,759 685,745 715,741 740,765 765,815 787,850'],
    ['g', '806,826 825,774 848,752 875,767 906,803 940,845 967,858 990,840 1007,790'], ['y', '806,822 825,770 848,749 875,765 906,803 940,842 967,855 990,836 1007,785'],
    ['r', '806,840 825,784 850,764 906,803 945,838 975,843 1007,770'], ['c', '806,875 830,800 860,779 906,803 945,829 980,815 1007,736'],
    ['p', '806,977 830,880 860,825 906,803 950,793 980,745 1007,631'],
    ['c', '1148,775 1165,800 1185,803 1222,779 1240,800 1260,890 1273,983'], ['y', '1145,808 1170,818 1200,797 1225,777 1243,800 1260,880 1273,950'],
    ['g', '1145,806 1170,820 1200,803 1222,787 1240,805 1260,885 1273,980'], ['r', '1143,830 1170,830 1200,797 1230,765 1250,790 1273,906'],
    ['p', '1148,612 1170,665 1198,682 1222,670 1245,700 1262,780 1273,885'],
    ['r', '1319,1040 1334,920 1354,832 1385,805 1419,803 1457,800 1482,756 1502,690 1520,565'],
    ['g', '1319,1055 1335,925 1355,837 1385,807 1419,804 1455,800 1480,755 1500,690 1520,552'],
    ['y', '1319,1045 1334,922 1353,833 1384,804 1419,802 1457,802 1482,760 1503,695 1520,568'],
    ['c', '1319,1130 1335,990 1355,890 1385,825 1419,803 1450,775 1475,720 1495,650 1520,478'],
    ['p', '1319,1257 1335,1120 1350,1010 1370,920 1395,850 1419,800 1450,730 1480,650 1500,545 1520,352']
  ];
  for (const [k, p] of F) curve(r, m, p, COL[k]);
  [[589, 674], [766, 851]].forEach(([y0]) => cols.forEach(([a, b], i) => {
    text(r, (a + b) / 2 - 3, y0 + 2, i % 2 ? 'ex' : 'ey', 9, 'middle', '#fff');
    text(r, b - 3, y0 + 47, i % 2 ? 'Px' : 'Py', 7, 'middle', '#fff');
  }));
}

/* tabs, toolbars and quick access bar */
document.querySelectorAll('[data-tabs]').forEach(bar => {
  bar.dataset.tabs.split(',').forEach((t, i) => {
    const on = t.endsWith('*'), w = i ? 63 : 80;
    const d = i ? `M0 0Q1 19 9 20H${w - 1}V0` : `M5 0C16 0 12 20 24 20H${w}`;
    const fillD = i ? d + 'Z' : (on ? `M5 0C16 0 12 20 24 20H${w}V0Z` : `M5 0C16 0 12 20 24 20H${w}V17C75 10 76 0 70 0Z`);
    const b = document.createElement('button');
    b.className = 'tab';
    let extra = !i && !on ? `<path d="M70 0C76 0 76 10 ${w} 18" fill="none" stroke="#596276"/>` : '';
    if (!i && on) extra = `<path d="M${w} 0V20" stroke="#596276"/>`;
    b.innerHTML = `<svg viewBox="0 0 ${w} 21" preserveAspectRatio="none"><path d="${fillD}" fill="url(#${on ? 'gTabOn' : 'gTab'})"/><path d="${d}" fill="none" stroke="#596276"/>${extra}</svg><span>${t.replace('*', '')}</span>`;
    bar.appendChild(b);
  });
});
const use = n => `<svg class="ic"><use href="#i-${n}"/></svg>`;
const btn = (n, label, cls = '') => `<button class="${cls}" aria-label="${label}">${use(n)}</button>`;
const sep = '<span class="sep"></span>', wide = '<span class="sep wide"></span>', caret = '<span class="caret"></span>';
const tail = `${sep}<button class="w38">当前${caret}</button>` + btn('help', 'Help');
const toolbar = `<button class="set">${use('chev')}设置</button>` + sep +
  btn('sync', 'Refresh') + btn('copy', 'Copy') + btn('edit', 'Save') + btn('print', 'Print') + sep +
  btn('pencil', 'Annotate') + btn('rect', 'Rectangle') + btn('arrow', 'Arrow') + btn('line', 'Line') + btn('text', 'Text') + sep +
  btn('lock', 'Lock', 'w24') + sep + btn('target', 'Fit', 'on') + btn('wins', 'Windows', 'w24') +
  `<button class="w32" aria-label="Layers">${use('layers')}${caret}</button><button class="w45">3 x 4${caret}</button>` +
  btn('clock', 'Reset') + sep + `<button class="w38">粗${caret}</button>` + tail;
document.querySelectorAll('.toolbar').forEach(t => {
  t.innerHTML = t.classList.contains('toolbar-end') ? `<button class="w12" aria-label="Line width">${caret}</button>` + tail : toolbar;
});
document.querySelectorAll('.titlebar').forEach(t => t.insertAdjacentHTML('beforeend',
  '<div class="win-ctl">' + btn('down', 'Menu') + btn('min', 'Minimize') + btn('max', 'Maximize') + btn('x', 'Close') + '</div>'));
$('quick').innerHTML = 'os | new open save _ edit undo redo cascade v | greydoc greydoc greyedit swap left right _ lens ri field mtf spot lensr lensw lensr wave || dots mtf theta || play bug |'
  .split(' ').map(n => n === '|' ? sep : n === '||' ? wide : n === '_' ? '<span class="skip"></span>' : n === 'v' ? caret : btn(n, n)).join('');
```
